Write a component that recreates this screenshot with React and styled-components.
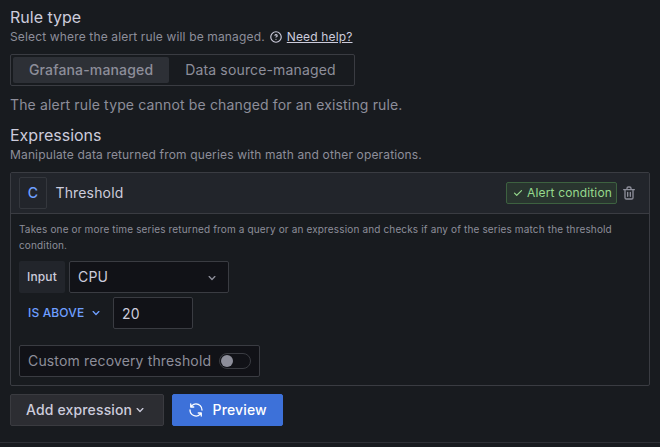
import React from 'react';
import styled, { createGlobalStyle } from 'styled-components';

const c = {
  canvas: '#111217',
  primary: '#181b1f',
  secondary: '#22252b',
  border: '#3a3c42',
  weak: '#2e3036',
  text: '#ccccdc',
  muted: '#8d8e9a',
  blue: '#6e9fff',
};

const GlobalStyle = createGlobalStyle`
  *, *::before, *::after { box-sizing: border-box; }
  body {
    margin: 0;
    background: ${c.primary};
    color: ${c.text};
    font: 400 14px/22px Inter, sans-serif;
    letter-spacing: 0.15px;
  }
  button, input { font: inherit; letter-spacing: inherit; color: inherit; }
`;

const Page = styled.main`
  height: 447px;
  display: flex;
  flex-direction: column;
  overflow: hidden;
`;

const Content = styled.div`
  height: 442px;
  flex: none;
  padding: 6px 10px 0;
`;

const Footer = styled.footer`
  flex: 1;
  border-top: 1px solid ${c.weak};
`;

const Title = styled.h4`
  margin: 0;
  font-size: 16px;
  font-weight: 400;
  line-height: 22px;
  letter-spacing: 0;
`;

const Description = styled.div`
  display: flex;
  align-items: center;
  height: 18px;
  font-size: 12px;
  line-height: 18px;
  color: ${c.muted};
`;

const HelpIcon = styled.span`
  display: flex;
  margin: 0 4px;
  color: ${c.text};
`;

const HelpLink = styled.a`
  color: ${c.text};
  text-decoration: underline;
`;

const RadioGroup = styled.div`
  display: inline-flex;
  height: 32px;
  margin-top: 8px;
  padding: 2px;
  border: 1px solid ${c.border};
  border-radius: 2px;
  vertical-align: top;
`;

const RadioOption = styled.button`
  height: 26px;
  padding: 0 16px;
  border: 0;
  border-radius: 2px;
  line-height: 26px;
  color: ${c.muted};
  font-weight: ${(p) => (p.$active ? 500 : 400)};
  background: ${(p) => (p.$active ? '#2d3036' : 'transparent')};
`;

const Notice = styled.p`
  margin: 8px 0;
  color: ${c.muted};
`;

const Card = styled.section`
  height: 214px;
  margin-top: 8px;
  border: 1px solid ${c.border};
  border-radius: 2px;
`;

const CardHeader = styled.header`
  display: flex;
  align-items: center;
  height: 41px;
  padding: 0 12px 0 8px;
  background: ${c.secondary};
  border-bottom: 1px solid ${c.border};
`;

const RefId = styled.div`
  width: 28px;
  height: 32px;
  border: 1px solid #34373d;
  border-radius: 2px;
  text-align: center;
  line-height: 30px;
  font-weight: 500;
  color: ${c.blue};
`;

const ExpressionName = styled.div`
  flex: 1;
  padding-left: 8.5px;
`;

const Badge = styled.span`
  display: flex;
  align-items: center;
  gap: 2px;
  height: 22px;
  padding: 0 4px;
  border: 1px solid #3d6140;
  border-radius: 2px;
  background: #29352f;
  color: #96d98d;
  font-size: 12px;
  line-height: 18px;
`;

const DeleteButton = styled.button`
  display: flex;
  margin-left: 4px;
  padding: 0;
  border: 0;
  background: none;
  color: ${c.muted};
`;

const CardBody = styled.div`
  padding: 7px 8px 8px;
`;

const Help = styled.p`
  margin: 0 0 8px;
  font-size: 10px;
  line-height: 16px;
  color: ${c.muted};
`;

const Row = styled.div`
  display: flex;
  gap: 4px;
  height: 32px;
  margin-bottom: ${(p) => p.$gap || 0}px;
`;

const FieldLabel = styled.label`
  width: 46px;
  border-radius: 2px;
  background: ${c.secondary};
  font-size: 12px;
  font-weight: 500;
  line-height: 32px;
  text-align: center;
`;

const Select = styled.button`
  display: flex;
  align-items: center;
  justify-content: space-between;
  width: 160px;
  height: 32px;
  padding: 0 8px;
  border: 1px solid ${c.border};
  border-radius: 2px;
  background: ${c.canvas};

  svg { margin-top: 1px; color: ${c.muted}; }
`;

const Operator = styled.button`
  display: flex;
  align-items: center;
  gap: 4px;
  width: 90px;
  padding: 0 0 0 9px;
  border: 0;
  background: none;
  color: ${c.blue};
  font-size: 12px;
  font-weight: 500;
`;

const NumberInput = styled.input`
  width: 80px;
  height: 32px;
  padding: 1px 8px 0;
  border: 1px solid ${c.border};
  border-radius: 2px;
  background: ${c.canvas};
`;

const Recovery = styled.div`
  display: inline-flex;
  align-items: center;
  gap: 8px;
  height: 32px;
  padding: 0 8px;
  border: 1px solid ${c.border};
  border-radius: 2px;
  background: ${c.canvas};
  color: ${c.muted};
`;

const Switch = styled.span`
  display: flex;
  align-items: center;
  width: 32px;
  height: 16px;
  padding-left: 1px;
  border: 1px solid ${c.border};
  border-radius: 8px;

  &::after {
    content: '';
    width: 12px;
    height: 12px;
    border-radius: 50%;
    background: ${c.muted};
  }
`;

const Actions = styled.div`
  display: flex;
  gap: 8px;
  margin-top: 8px;
`;

const Button = styled.button`
  display: flex;
  align-items: center;
  gap: ${(p) => (p.$primary ? 8.5 : 0)}px;
  width: ${(p) => (p.$primary ? 111 : 154)}px;
  height: 32px;
  padding: 0 0 0 15px;
  border: 1px solid ${(p) => (p.$primary ? '#3d71d9' : '#3a3b40')};
  border-radius: 2px;
  background: ${(p) => (p.$primary ? '#3d71d9' : '#2c2d32')};
  color: ${(p) => (p.$primary ? '#fff' : c.text)};
  font-weight: 500;
`;

const paths = {
  check: 'M18.71,7.21a1,1,0,0,0-1.42,0L9.84,14.67,6.71,11.53A1,1,0,1,0,5.29,13l3.84,3.84a1,1,0,0,0,1.42,0l8.16-8.16A1,1,0,0,0,18.71,7.21Z',
  down: 'M17,9.17a1,1,0,0,0-1.41,0L12,12.71,8.46,9.17a1,1,0,0,0-1.41,0,1,1,0,0,0,0,1.42l4.24,4.24a1,1,0,0,0,1.42,0L17,10.59A1,1,0,0,0,17,9.17Z',
  trash: 'M10,18a1,1,0,0,0,1-1V11a1,1,0,0,0-2,0v6A1,1,0,0,0,10,18ZM20,6H16V5a3,3,0,0,0-3-3H11A3,3,0,0,0,8,5V6H4A1,1,0,0,0,4,8H5V19a3,3,0,0,0,3,3h8a3,3,0,0,0,3-3V8h1a1,1,0,0,0,0-2ZM10,5a1,1,0,0,1,1-1h2a1,1,0,0,1,1,1V6H10Zm7,14a1,1,0,0,1-1,1H8a1,1,0,0,1-1-1V8H17Zm-3-1a1,1,0,0,0,1-1V11a1,1,0,0,0-2,0v6A1,1,0,0,0,14,18Z',
  question: 'M11.29,15.29a1.58,1.58,0,0,0-.12.15.76.76,0,0,0-.09.18.64.64,0,0,0-.06.18,1.36,1.36,0,0,0,0,.2.84.84,0,0,0,.08.38.9.9,0,0,0,.54.54.94.94,0,0,0,.76,0,.9.9,0,0,0,.54-.54A1,1,0,0,0,13,16a1,1,0,0,0-.29-.71A1,1,0,0,0,11.29,15.29ZM12,2A10,10,0,1,0,22,12,10,10,0,0,0,12,2Zm0,18a8,8,0,1,1,8-8A8,8,0,0,1,12,20ZM12,7A3,3,0,0,0,9.4,8.5a1,1,0,1,0,1.73,1A1,1,0,0,1,12,9a1,1,0,0,1,0,2,1,1,0,1,0,0,2,3,3,0,0,0,0-6Z',
  sync: 'M19.91,15.51H15.38a1,1,0,0,0,0,2h2.4A8,8,0,0,1,4,12a1,1,0,1,0-2,0,10,10,0,0,0,16.88,7.23V21a1,1,0,0,0,2,0V16.5A1,1,0,0,0,19.91,15.51ZM12,2A10,10,0,0,0,5.12,4.77V3a1,1,0,0,0-2,0V7.5a1,1,0,0,0,1,1h4.5a1,1,0,0,0,0-2H6.22A8,8,0,0,1,20,12a1,1,0,0,0,2,0A10,10,0,0,0,12,2Z',
};

const Svg = styled.svg`
  display: block;
  flex: none;
  fill: currentColor;
`;

function Icon({ name, size = 16 }) {
  return (
    <Svg width={size} height={size} viewBox="0 0 24 24" aria-hidden="true">
      <path d={paths[name]} />
    </Svg>
  );
}

export default function App() {
  return (
    <Page>
      <GlobalStyle />
      <Content>
        <Title>Rule type</Title>
        <Description>
          Select where the alert rule will be managed.
          <HelpIcon><Icon name="question" size={14} /></HelpIcon>
          <HelpLink>Need help?</HelpLink>
        </Description>
        <RadioGroup>
          <RadioOption $active>Grafana-managed</RadioOption>
          <RadioOption>Data source-managed</RadioOption>
        </RadioGroup>
        <Notice>The alert rule type cannot be changed for an existing rule.</Notice>
        <Title>Expressions</Title>
        <Description>Manipulate data returned from queries with math and other operations.</Description>
        <Card>
          <CardHeader>
            <RefId>C</RefId>
            <ExpressionName>Threshold</ExpressionName>
            <Badge><Icon name="check" size={14} />Alert condition</Badge>
            <DeleteButton aria-label="Remove expression"><Icon name="trash" size={16} /></DeleteButton>
          </CardHeader>
          <CardBody>
            <Help>
              Takes one or more time series returned from a query or an expression and checks if any of the series match the threshold condition.
            </Help>
            <Row $gap={4}>
              <FieldLabel>Input</FieldLabel>
              <Select>CPU<Icon name="down" /></Select>
            </Row>
            <Row $gap={16}>
              <Operator>IS ABOVE<Icon name="down" /></Operator>
              <NumberInput defaultValue="20" />
            </Row>
            <Recovery>Custom recovery threshold<Switch /></Recovery>
          </CardBody>
        </Card>
        <Actions>
          <Button>Add expression<Icon name="down" /></Button>
          <Button $primary><Icon name="sync" />Preview</Button>
        </Actions>
      </Content>
      <Footer />
    </Page>
  );
}
